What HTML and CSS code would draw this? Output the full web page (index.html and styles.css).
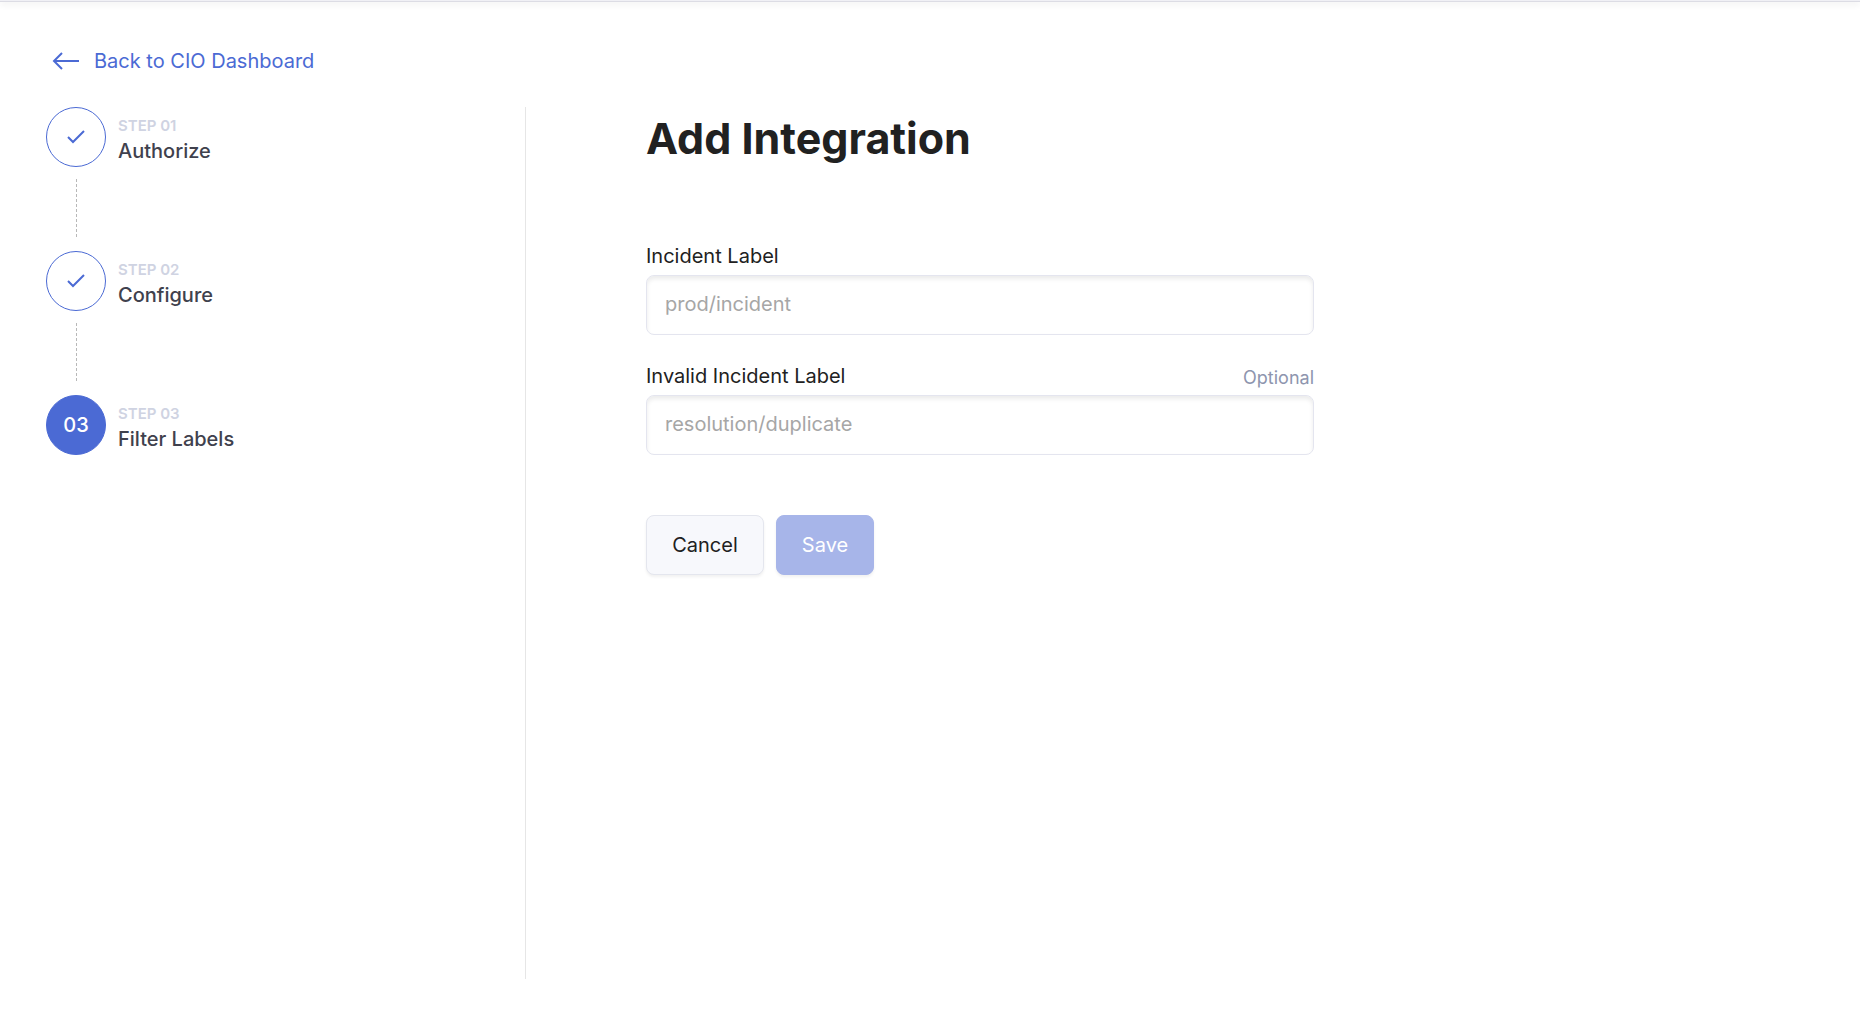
FILE: index.html
```html
<!DOCTYPE html>
<html lang="en">
<head>
<meta charset="utf-8">
<meta name="viewport" content="width=device-width, initial-scale=1">
<title>Add Integration</title>
<link rel="stylesheet" href="styles.css">
</head>
<body>
<div class="topbar"></div>
<div class="page">
  <nav class="back-nav">
    <a class="back-link" href="#">
      <svg class="back-icon" width="28" height="20" viewBox="0 0 28 20" aria-hidden="true"><path d="M27 10H2M10 2L2 10l8 8"/></svg>
      <span>Back to CIO Dashboard</span>
    </a>
  </nav>
  <div class="layout">
    <ol class="steps">
      <li class="step">
        <span class="step-marker"><svg class="check" width="20" height="16" viewBox="0 0 20 16" aria-hidden="true"><path d="M2 8l5 5L18 2"/></svg></span>
        <div class="step-text"><span class="step-number">STEP 01</span><span class="step-name">Authorize</span></div>
      </li>
      <li class="step">
        <span class="step-marker"><svg class="check" width="20" height="16" viewBox="0 0 20 16" aria-hidden="true"><path d="M2 8l5 5L18 2"/></svg></span>
        <div class="step-text"><span class="step-number">STEP 02</span><span class="step-name">Configure</span></div>
      </li>
      <li class="step">
        <span class="step-marker step-marker-current">03</span>
        <div class="step-text"><span class="step-number">STEP 03</span><span class="step-name">Filter Labels</span></div>
      </li>
    </ol>
    <main class="content">
      <h1 class="title">Add Integration</h1>
      <form class="form">
        <div class="field">
          <div class="field-head"><label class="field-label" for="incident">Incident Label</label></div>
          <input class="field-input" id="incident" type="text" placeholder="prod/incident">
        </div>
        <div class="field">
          <div class="field-head"><label class="field-label" for="invalid">Invalid Incident Label</label><span class="field-hint">Optional</span></div>
          <input class="field-input" id="invalid" type="text" placeholder="resolution/duplicate">
        </div>
        <div class="actions">
          <button class="button button-cancel" type="button">Cancel</button>
          <button class="button button-save" type="submit" disabled>Save</button>
        </div>
      </form>
    </main>
  </div>
</div>
</body>
</html>
```
FILE: styles.css
```css
* { box-sizing: border-box; }
body {
  margin: 0;
  min-height: 100vh;
  display: flex;
  flex-direction: column;
  background: #fff;
  color: #212121;
  font-family: Inter, "Open Sans", sans-serif;
  font-size: 20px;
  font-weight: 400;
  line-height: 24px;
}
.topbar {
  height: 2px;
  background: #f0f0f5;
  border-bottom: 1px solid #dcdce4;
  box-shadow: 0 2px 6px rgba(0, 0, 0, .12);
}
.page {
  flex: 1;
  display: flex;
  flex-direction: column;
  padding: 47px 46px;
}
.back-nav { display: flex; margin-bottom: 34px; padding-left: 6px; }
.back-link {
  display: flex;
  align-items: center;
  gap: 14px;
  color: #4b6ad4;
  text-decoration: none;
}
.back-icon, .check { fill: none; stroke: #4b6ad4; stroke-width: 2; }
.layout { flex: 1; display: flex; }
.steps {
  flex: 0 0 480px;
  margin: 0;
  padding: 0;
  list-style: none;
  border-right: 1px solid #e6e6e6;
}
.step { display: grid; grid-template-columns: 60px 1fr; column-gap: 12px; }
.step:not(:last-child)::after {
  content: "";
  width: 1px;
  height: 58px;
  margin: 12px 0 14px 30px;
  background: repeating-linear-gradient(#b8b8b8 0 3px, transparent 3px 5px);
}
.step-marker {
  display: flex;
  align-items: center;
  justify-content: center;
  height: 60px;
  border: 1px solid #4b6ad4;
  border-radius: 50%;
  color: #fff;
}
.step-marker-current { background: #4b6ad4; font-weight: 500; }
.step-text { display: flex; flex-direction: column; gap: 1px; padding-top: 7px; }
.step-number { color: #cfd3e2; font-size: 15px; font-weight: 600; }
.step-name { color: #3f414d; font-weight: 500; }
.content { flex: 1; padding: 0 120px; }
.title { margin: 5px 0 75px; font-size: 43px; line-height: 52px; font-weight: 700; }
.form { max-width: 668px; }
.field { margin-bottom: 24px; }
.field-head { display: flex; justify-content: space-between; align-items: flex-end; padding-bottom: 7px; height: 36px; }
.field-hint { color: #8e95ae; font-size: 18px; line-height: 20px; }
.field-input {
  display: block;
  width: 100%;
  height: 60px;
  padding: 0 18px 2px;
  border: 1px solid #e4e5ef;
  border-radius: 8px;
  background: #fff;
  box-shadow: inset 0 3px 4px rgba(0, 0, 0, .08);
  color: inherit;
  font: inherit;
}
.field-input::placeholder { color: #a6a6a6; opacity: 1; }
.actions { display: flex; gap: 12px; padding-top: 36px; }
.button {
  height: 60px;
  padding: 0 24px;
  border: 1px solid #e4e6ee;
  border-radius: 8px;
  box-shadow: 0 2px 3px rgba(0, 0, 0, .06);
  font: inherit;
}
.button-cancel { background: #f7f8fc; color: #212121; min-width: 118px; }
.button-save { background: #a7b5e9; border-color: #a7b5e9; color: #fff; min-width: 98px; }
```
